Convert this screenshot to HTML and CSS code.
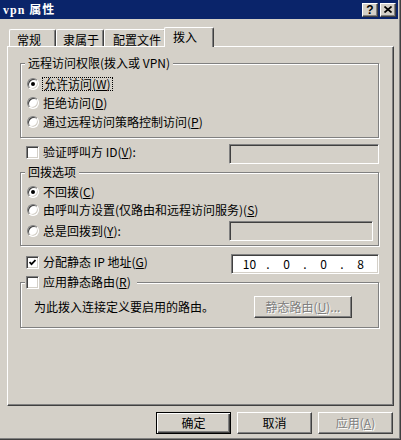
FILE: index.html
```html
<!DOCTYPE html>
<html lang="zh-CN">
<head>
    <meta charset="UTF-8">
    <title>vpn 属性</title>
    <link rel="stylesheet" href="styles.css">
</head>
<body>

    <div class="window">
        <div class="titlebar">
            <span class="title">vpn 属性</span>
            <div class="caption-buttons">
                <span class="cap-btn help">?</span>
                <span class="cap-btn close">
                    <svg width="8" height="7" viewBox="0 0 8 7">
                        <path d="M0.5 0.5 L7.5 6.5 M7.5 0.5 L0.5 6.5" stroke="#000" stroke-width="1.7" fill="none"/>
                    </svg>
                </span>
            </div>
        </div>

        <div class="tabs">
            <div class="tab">常规</div>
            <div class="tab">隶属于</div>
            <div class="tab">配置文件</div>
            <div class="tab active">拨入</div>
        </div>

        <div class="panel">
            <div class="group">
                <div class="group-title">远程访问权限(拨入或 VPN)</div>
                <div class="opt first">
                    <span class="radio checked"></span>
                    <span class="focus">允许访问(<u>W</u>)</span>
                </div>
                <div class="opt">
                    <span class="radio"></span>
                    <span>拒绝访问(<u>D</u>)</span>
                </div>
                <div class="opt">
                    <span class="radio"></span>
                    <span>通过远程访问策略控制访问(<u>P</u>)</span>
                </div>
            </div>

            <div class="row verify">
                <label class="check-label">
                    <span class="check"></span>
                    <span>验证呼叫方 ID(<u>V</u>):</span>
                </label>
                <span class="field verify-field"></span>
            </div>

            <div class="group callback">
                <div class="group-title">回拨选项</div>
                <div class="opt first">
                    <span class="radio checked"></span>
                    <span>不回拨(<u>C</u>)</span>
                </div>
                <div class="opt">
                    <span class="radio"></span>
                    <span>由呼叫方设置(仅路由和远程访问服务)(<u>S</u>)</span>
                </div>
                <div class="opt last">
                    <span class="radio"></span>
                    <span>总是回拨到(<u>Y</u>):</span>
                    <span class="field callback-field"></span>
                </div>
            </div>

            <div class="row static-ip">
                <label class="check-label">
                    <span class="check">
                        <svg width="7" height="7" viewBox="0 0 7 7">
                            <path d="M0.5 3 L2.5 5.2 L6.5 1" stroke="#000" stroke-width="1.8" fill="none"/>
                        </svg>
                    </span>
                    <span>分配静态 IP 地址(<u>G</u>)</span>
                </label>
                <div class="field ip">
                    <span class="octet">10</span><span class="dot">.</span>
                    <span class="octet">0</span><span class="dot">.</span>
                    <span class="octet">0</span><span class="dot">.</span>
                    <span class="octet">8</span>
                </div>
            </div>

            <div class="group routes">
                <div class="group-title check-title">
                    <span class="check"></span>
                    <span>应用静态路由(<u>R</u>)</span>
                </div>
                <div class="route-row">
                    <span>为此拨入连接定义要启用的路由。</span>
                    <button type="button" class="btn route-btn" disabled>静态路由(<u>U</u>)...</button>
                </div>
            </div>
        </div>

        <div class="dialog-buttons">
            <button type="button" class="btn default">确定</button>
            <button type="button" class="btn">取消</button>
            <button type="button" class="btn" disabled>应用(<u>A</u>)</button>
        </div>
    </div>

</body>
</html>
```

FILE: styles.css
```css
* {
    box-sizing: border-box;
}

body {
    margin: 0;
    background-color: #d4d0c8;
    color: #000;
    font-family: "Noto Sans CJK SC", sans-serif;
    font-size: 12px;
    line-height: 14px;
}

.window {
    width: 401px;
    height: 440px;
    background-color: #d4d0c8;
    box-shadow: inset -1px -1px 0 #404040, inset -2px -2px 0 #808080;
    overflow: hidden;
}

/* タイトルバー */
.titlebar {
    height: 19px;
    margin-right: 3px;
    padding: 0 2px 0 3px;
    background-color: #0a246a;
    display: flex;
    align-items: center;
    justify-content: space-between;
}

.title {
    color: #fff;
    font-weight: bold;
    font-family: "Liberation Serif", "Noto Sans CJK SC", serif;
    font-size: 12px;
    letter-spacing: 1px;
}

.caption-buttons {
    display: flex;
    gap: 2px;
}

.cap-btn {
    width: 16px;
    height: 14px;
    background-color: #d4d0c8;
    border: 1px solid;
    border-color: #fff #404040 #404040 #fff;
    box-shadow: inset -1px -1px 0 #808080;
    display: flex;
    align-items: center;
    justify-content: center;
}

.cap-btn.help {
    font-family: "Liberation Sans", sans-serif;
    font-weight: bold;
    font-size: 12px;
    line-height: 12px;
}

/* タブ */
.tabs {
    display: flex;
    align-items: flex-end;
    height: 19px;
    margin: 8px 0 0 9px;
}

.tab {
    height: 17px;
    padding: 3px 0 0 7px;
    line-height: 13px;
    border-left: 1px solid #fff;
    border-top: 1px solid #fff;
    border-right: 1px solid #404040;
    border-radius: 2px 2px 0 0;
    box-shadow: inset -1px 0 0 #808080;
}

.tab:nth-child(1) { width: 47px; }
.tab:nth-child(2) { width: 48px; padding-left: 6px; }
.tab:nth-child(3) { width: 62px; padding-left: 8px; }

.tab.active {
    width: 50px;
    height: 20px;
    margin: 0 -2px -1px -2px;
    padding: 2px 0 0 8px;
    background-color: #d4d0c8;
    position: relative;
    z-index: 1;
}

.panel {
    width: 387px;
    height: 360px;
    margin-left: 7px;
    padding: 16px 14px 0 12px;
    border-left: 1px solid #fff;
    border-top: 1px solid #fff;
    border-right: 1px solid #404040;
    border-bottom: 1px solid #404040;
    box-shadow: inset -1px -1px 0 #808080;
}

/* グループボックス */
.group {
    border: 1px solid #808080;
    box-shadow: 1px 1px 0 #fff, inset 1px 1px 0 #fff;
    padding-bottom: 6px;
}

.group-title {
    display: flex;
    align-items: center;
    width: max-content;
    height: 14px;
    margin: -8px 0 0 4px;
    padding: 0 3px;
    background-color: #d4d0c8;
}

.check-title {
    padding: 0 6px 0 1px;
    gap: 4px;
}

.opt {
    display: flex;
    align-items: center;
    gap: 4px;
    height: 19px;
    padding-left: 6px;
}

.opt.first {
    margin-top: 4px;
}

.callback {
    margin-top: 8px;
    padding-bottom: 4px;
}

.callback .opt {
    height: 18px;
}

.callback .opt.last {
    height: 20px;
    margin-top: 2px;
    padding-right: 5px;
}

.callback-field {
    width: 144px;
    margin-left: auto;
}

.radio {
    position: relative;
    flex: none;
    width: 12px;
    height: 12px;
    border-radius: 50%;
    background-color: #fff;
    border: 1px solid;
    border-color: #808080 #fff #fff #808080;
    box-shadow: inset 1px 1px 0 #404040, inset -1px -1px 0 #d4d0c8;
}

.radio.checked::after {
    content: "";
    position: absolute;
    left: 3px;
    top: 3px;
    width: 4px;
    height: 4px;
    border-radius: 50%;
    background-color: #000;
}

.focus {
    outline: 1px dotted #000;
    padding: 0 1px;
    line-height: 12px;
}

.check {
    flex: none;
    width: 13px;
    height: 13px;
    background-color: #fff;
    border: 1px solid;
    border-color: #808080 #fff #fff #808080;
    box-shadow: inset 1px 1px 0 #404040, inset -1px -1px 0 #d4d0c8;
    display: flex;
    align-items: center;
    justify-content: center;
}

.row {
    display: flex;
    justify-content: space-between;
    align-items: flex-start;
    height: 20px;
}

.check-label {
    display: flex;
    align-items: center;
    gap: 4px;
    margin: 1px 0 0 6px;
}

.verify {
    margin-top: 6px;
}

.static-ip {
    margin-top: 8px;
}

.field {
    display: block;
    height: 20px;
    border: 1px solid;
    border-color: #808080 #fff #fff #808080;
    box-shadow: inset 1px 1px 0 #404040, inset -1px -1px 0 #d4d0c8;
    background-color: #d4d0c8;
}

.verify-field {
    width: 150px;
}

.field.ip {
    width: 148px;
    padding: 0 1px;
    background-color: #fff;
    display: flex;
    align-items: center;
}

.octet {
    width: 33px;
    text-align: center;
}

.dot {
    width: 4px;
    text-align: center;
}

.routes {
    margin-top: 8px;
    padding-bottom: 9px;
}

.route-row {
    display: flex;
    justify-content: space-between;
    align-items: center;
    margin-top: 7px;
    padding: 0 26px 0 13px;
}

/* ボタン */
.btn {
    width: 75px;
    height: 22px;
    padding: 0;
    background-color: #d4d0c8;
    border: 1px solid;
    border-color: #fff #404040 #404040 #fff;
    box-shadow: inset -1px -1px 0 #808080;
    color: #000;
    font: inherit;
    display: flex;
    align-items: center;
    justify-content: center;
}

.btn.default {
    border-color: #000;
    box-shadow: inset 1px 1px 0 #fff, inset -1px -1px 0 #404040, inset -2px -2px 0 #808080;
}

.btn:disabled {
    color: #808080;
    text-shadow: 1px 1px 0 #fff;
}

.route-btn {
    width: 98px;
}

.dialog-buttons {
    display: flex;
    justify-content: flex-end;
    gap: 6px;
    margin-top: 6px;
    padding-right: 8px;
}
```
